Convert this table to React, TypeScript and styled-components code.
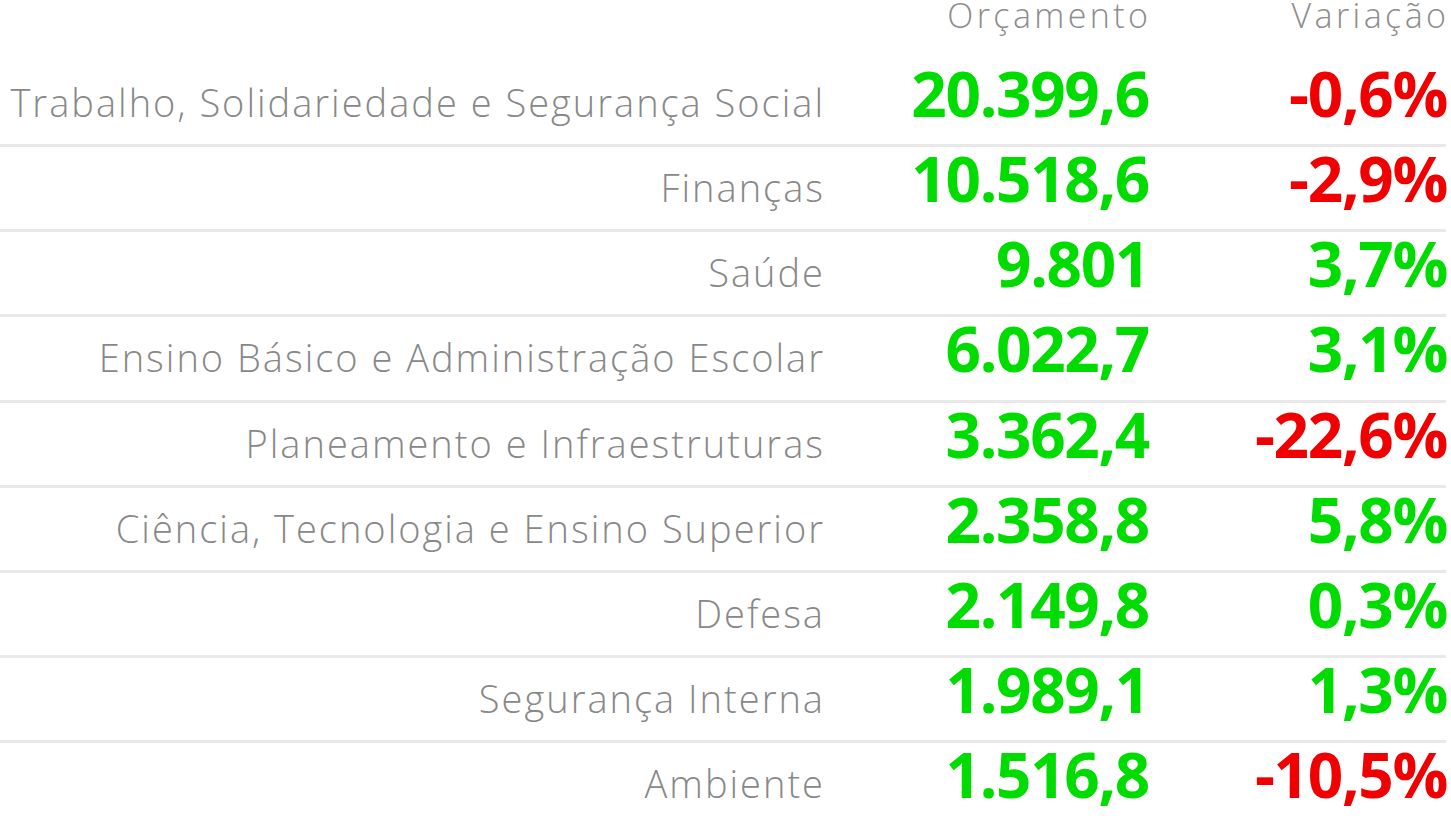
import React from "react";
import styled, { createGlobalStyle } from "styled-components";

const GlobalStyle = createGlobalStyle`
  html, body {
    margin: 0;
    padding: 0;
    background: #ffffff;
    overflow: hidden;
  }
  body {
    font-family: "Open Sans", "Noto Sans", sans-serif;
  }
`;

const Table = styled.div`
  width: 1451px;
  padding-right: 5px;
  box-sizing: border-box;
`;

const Row = styled.div<{ $header?: boolean }>`
  display: grid;
  grid-template-columns: 1fr 325px 298px;
  align-items: baseline;
  box-sizing: border-box;
  height: ${(p) => (p.$header ? "62px" : "85.14px")};
  border-bottom: ${(p) => (p.$header ? "none" : "3px solid #e9e9e9")};
  line-height: 1;
`;

const HeadCell = styled.div`
  font-size: 34px;
  font-weight: 300;
  color: #8c8c8c;
  text-align: right;
  line-height: 30px;
  letter-spacing: 3.4px;
  margin-right: -3.4px;
`;

const Label = styled.div`
  font-size: 38px;
  font-weight: 300;
  color: #888888;
  text-align: right;
  letter-spacing: 2px;
  margin-right: -2px;
  white-space: nowrap;
`;

const Value = styled.div<{ $negative?: boolean }>`
  font-size: 62px;
  font-weight: 700;
  text-align: right;
  letter-spacing: -1.3px;
  margin-right: -1px;
  color: ${(p) => (p.$negative ? "#f00000" : "#00dc00")};
  white-space: nowrap;
`;

type Item = { name: string; budget: string; change: string };

const items: Item[] = [
  { name: "Trabalho, Solidariedade e Segurança Social", budget: "20.399,6", change: "-0,6%" },
  { name: "Finanças", budget: "10.518,6", change: "-2,9%" },
  { name: "Saúde", budget: "9.801", change: "3,7%" },
  { name: "Ensino Básico e Administração Escolar", budget: "6.022,7", change: "3,1%" },
  { name: "Planeamento e Infraestruturas", budget: "3.362,4", change: "-22,6%" },
  { name: "Ciência, Tecnologia e Ensino Superior", budget: "2.358,8", change: "5,8%" },
  { name: "Defesa", budget: "2.149,8", change: "0,3%" },
  { name: "Segurança Interna", budget: "1.989,1", change: "1,3%" },
  { name: "Ambiente", budget: "1.516,8", change: "-10,5%" },
];

export default function App() {
  return (
    <>
      <GlobalStyle />
      <Table>
        <Row $header>
          <div />
          <HeadCell>Orçamento</HeadCell>
          <HeadCell>Variação</HeadCell>
        </Row>
        {items.map((item) => (
          <Row key={item.name}>
            <Label>{item.name}</Label>
            <Value>{item.budget}</Value>
            <Value $negative={item.change.startsWith("-")}>{item.change}</Value>
          </Row>
        ))}
      </Table>
    </>
  );
}
